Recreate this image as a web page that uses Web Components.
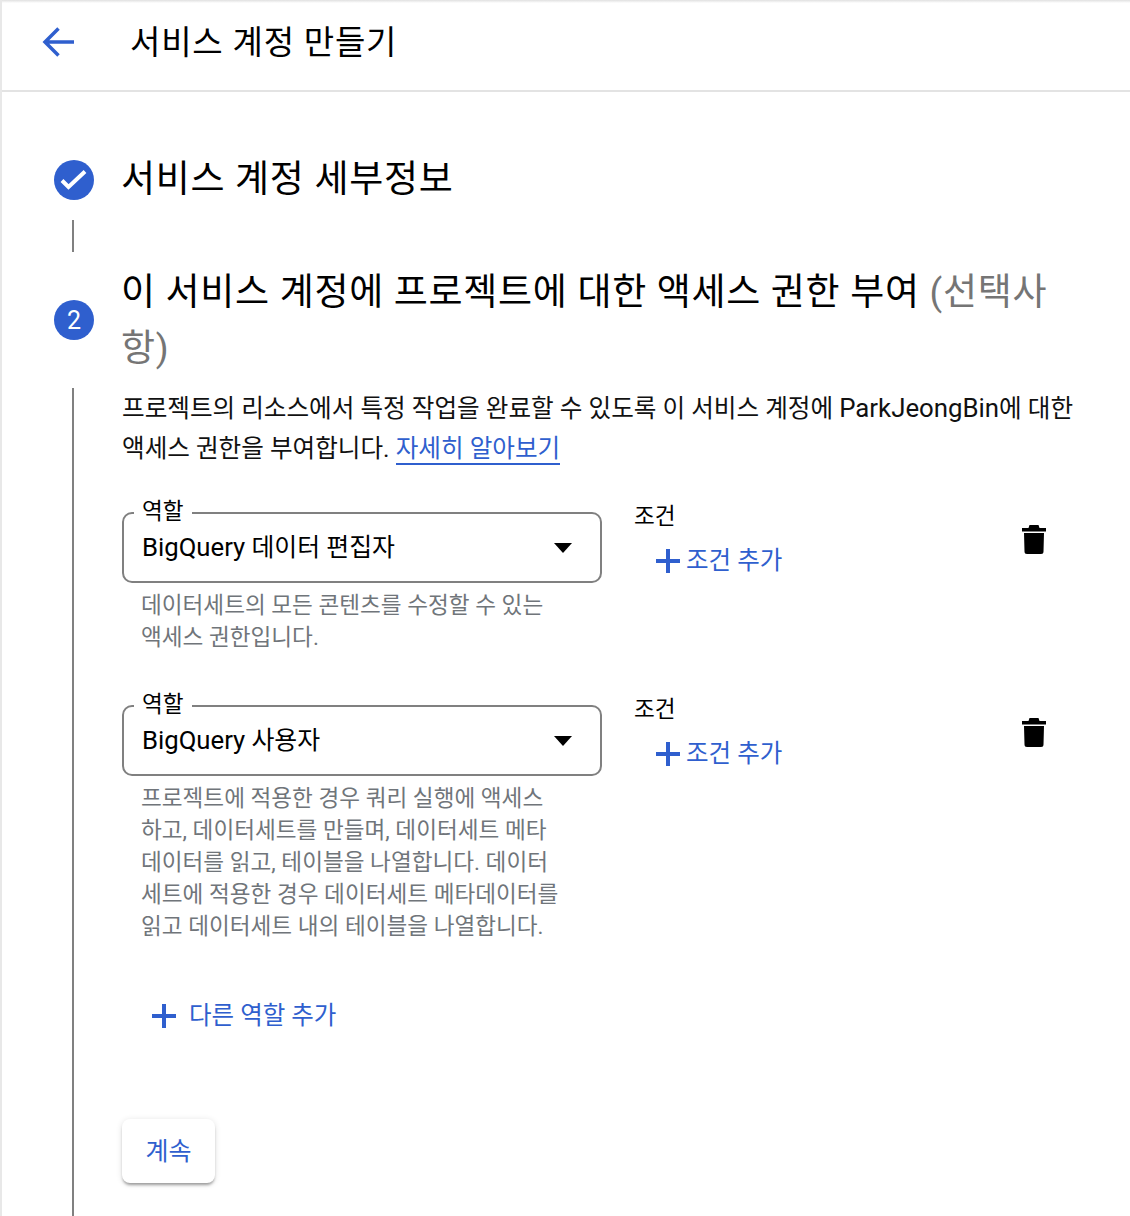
<!DOCTYPE html>
<html lang="ko">
<head>
<meta charset="utf-8">
<title>서비스 계정 만들기</title>
<style>
  html, body { margin: 0; padding: 0; background: #fff; }
  body {
    font-family: Roboto, "Noto Sans CJK KR", sans-serif;
    color: #000;
    height: 1216px;
    overflow: hidden;
  }
</style>
</head>
<body>
<service-page>
  <page-header slot="header">서비스 계정 만들기</page-header>

  <step-item state="done">
    <span slot="title">서비스 계정 세부정보</span>
  </step-item>
  <step-link></step-link>

  <step-item number="2" class="open">
    <span slot="title">이 서비스 계정에 프로젝트에 대한 액세스 권한 부여 <em style="font-style:normal;color:#757575">(선택사항)</em></span>
    <step-body>
      <intro-text>프로젝트의 리소스에서 특정 작업을 완료할 수 있도록 이 서비스 계정에 <span style="font-size:25.800px;line-height:0">ParkJeongBin</span>에 대한 액세스 권한을 부여합니다. <a slot="link">자세히 알아보기</a></intro-text>
      <role-row latin="BigQuery" value="데이터 편집자">데이터세트의 모든 콘텐츠를 수정할 수 있는 액세스 권한입니다.</role-row>
      <role-row latin="BigQuery" value="사용자">프로젝트에 적용한 경우 쿼리 실행에 액세스하고, 데이터세트를 만들며, 데이터세트 메타데이터를 읽고, 테이블을 나열합니다. 데이터세트에 적용한 경우 데이터세트 메타데이터를 읽고 데이터세트 내의 테이블을 나열합니다.</role-row>
      <add-link wide>다른 역할 추가</add-link>
      <raised-button>계속</raised-button>
    </step-body>
  </step-item>
</service-page>

<script>
(function() {
  const blue = '#2f5fce';

  const plusIcon = `<svg width="26" height="26" viewBox="0 0 26 26"><path d="M11 1h4v10h10v4H15v10h-4V15H1v-4h10z" fill="${blue}"/></svg>`;

  class ServicePage extends HTMLElement {
    constructor() {
      super();
      this.attachShadow({ mode: 'open' });
      this.shadowRoot.innerHTML = `
        <style>
          :host { display: block; height: 1216px; border-left: 2px solid #e8e8e8; box-sizing: border-box; overflow: hidden; position: relative; }
          .top { height: 3px; background: linear-gradient(#e0e0e0, #fff); position: absolute; left: 0; right: 0; top: 0; }
          main { display: block; padding: 60px 0 0 52px; }
        </style>
        <div class="top"></div>
        <slot name="header"></slot>
        <main><slot></slot></main>
      `;
    }
  }

  class PageHeader extends HTMLElement {
    constructor() {
      super();
      this.attachShadow({ mode: 'open' });
      this.shadowRoot.innerHTML = `
        <style>
          :host { display: flex; align-items: center; height: 92px; padding-left: 38px; padding-bottom: 6px; box-sizing: border-box; border-bottom: 2px solid #e3e3e3; }
          svg { display: block; width: 36px; height: 36px; margin-right: 54px; }
          h1 { margin: 0; font: 400 33px/1 Roboto, "Noto Sans CJK KR", sans-serif; letter-spacing: .8px; white-space: nowrap; }
        </style>
        <svg viewBox="0 0 36 36"><path d="M34 18H5.500M18.500 4.500 5 18l13.500 13.500" fill="none" stroke="${blue}" stroke-width="3.500"/></svg>
        <h1><slot></slot></h1>
      `;
    }
  }

  class StepItem extends HTMLElement {
    constructor() {
      super();
      this.attachShadow({ mode: 'open' });
      const done = this.getAttribute('state') === 'done';
      const badge = done
        ? `<svg viewBox="0 0 40 40" width="40" height="40"><circle cx="20" cy="20" r="20" fill="${blue}"/><path d="M8 20.500l6.500 6.500L31 11.500" fill="none" stroke="#fff" stroke-width="4"/></svg>`
        : `<span class="num">${this.getAttribute('number') || ''}</span>`;
      this.shadowRoot.innerHTML = `
        <style>
          :host { display: grid; grid-template-columns: 40px 1fr; column-gap: 27px; }
          .badge { grid-row: 1; align-self: center; width: 40px; height: 40px; margin-top: -1px; }
          .badge svg { display: block; }
          .num { display: flex; align-items: center; justify-content: center; width: 40px; height: 40px; border-radius: 50%; background: ${blue}; color: #fff; font: 400 25px Roboto, sans-serif; }
          h2 { grid-row: 1; margin: 0; padding-right: 76px; font: 400 37px/56px Roboto, "Noto Sans CJK KR", sans-serif; letter-spacing: .7px; }
          .body { grid-column: 1 / 3; }
        </style>
        <div class="badge">${badge}</div>
        <h2><slot name="title"></slot></h2>
        <div class="body"><slot></slot></div>
      `;
    }
  }

  class StepLink extends HTMLElement {
    constructor() {
      super();
      this.attachShadow({ mode: 'open' });
      this.shadowRoot.innerHTML = `
        <style>
          :host { display: block; width: 2px; height: 32px; margin: 12px 0 12.500px 18px; background: #808080; }
        </style>
      `;
    }
  }

  class StepBody extends HTMLElement {
    constructor() {
      super();
      this.attachShadow({ mode: 'open' });
      this.shadowRoot.innerHTML = `
        <style>
          :host { display: block; margin: 11.500px 0 0 18px; padding: 1px 0 40px 48px; border-left: 2px solid #808080; min-height: 900px; box-sizing: border-box; }
        </style>
        <slot></slot>
      `;
    }
  }

  class IntroText extends HTMLElement {
    constructor() {
      super();
      this.attachShadow({ mode: 'open' });
      this.shadowRoot.innerHTML = `
        <style>
          :host { display: block; width: 960px; font-size: 24.600px; line-height: 40px; color: #111; margin-bottom: 43px; }
          ::slotted(a) { color: ${blue}; border-bottom: 2px solid ${blue}; }
        </style>
        <slot></slot><slot name="link"></slot>
      `;
    }
  }

  class RoleRow extends HTMLElement {
    constructor() {
      super();
      this.attachShadow({ mode: 'open' });
      this.shadowRoot.innerHTML = `
        <style>
          :host { display: grid; grid-template-columns: 480px 1fr 24px; column-gap: 32px; width: 924px; margin-bottom: 51px; }
          .field { position: relative; height: 71px; box-sizing: border-box; border: 2px solid #808080; border-radius: 10px; display: flex; align-items: center; justify-content: space-between; padding: 0 28px 6px 18px; font-size: 24.900px; }
          .latin { font-size: 25.700px; line-height: 0; }
          .legend { position: absolute; left: 10px; top: -17px; padding: 0 8px; background: #fff; font-size: 22.600px; line-height: 30px; }
          .arrow { width: 0; height: 0; margin-top: 6px; border: 9.500px solid transparent; border-top: 10px solid #000; border-bottom: 0; }
          .help { padding: 7px 41px 0 19px; font-size: 22.600px; line-height: 32px; color: #70757a; }
          .cond { margin-top: -10px; font-size: 22.600px; line-height: 30px; }
          .del { padding-top: 13px; }
          .del svg { display: block; }
        </style>
        <div>
          <div class="field"><span class="legend">역할</span><span><span class="latin">${this.getAttribute('latin')}</span> ${this.getAttribute('value')}</span><span class="arrow"></span></div>
          <div class="help"><slot></slot></div>
        </div>
        <div class="cond">조건<add-link></add-link></div>
        <div class="del"><svg width="24" height="29" viewBox="0 0 24 29"><path d="M7.500 0h9l1 3H24v3.500H0V3h6.500zM2 8h20l-.5 18.500a2.500 2.500 0 0 1-2.500 2.500H5a2.500 2.500 0 0 1-2.500-2.500z" fill="#000"/></svg></div>
      `;
    }
  }

  class AddLink extends HTMLElement {
    constructor() {
      super();
      this.attachShadow({ mode: 'open' });
      const wide = this.hasAttribute('wide');
      const label = this.textContent.trim() || '조건 추가';
      this.shadowRoot.innerHTML = `
        <style>
          :host { display: flex; align-items: center; gap: ${wide ? 12 : 5}px; margin: ${wide ? '58px 0 0 29px' : '13.500px 0 0 21px'}; color: ${blue}; font-size: 24.500px; line-height: 30px; }
          svg { display: block; }
        </style>
        ${plusIcon}<span>${label}</span>
      `;
    }
  }

  class RaisedButton extends HTMLElement {
    constructor() {
      super();
      this.attachShadow({ mode: 'open' });
      this.shadowRoot.innerHTML = `
        <style>
          :host { display: flex; align-items: center; justify-content: center; width: 93px; height: 64px; box-sizing: border-box; padding-bottom: 4px; margin-top: 88px; border-radius: 8px; background: #fff; color: ${blue}; font-size: 25px; box-shadow: 0 3px 3px -1px rgba(0,0,0,.35), 0 1px 6px rgba(0,0,0,.12); }
        </style>
        <slot></slot>
      `;
    }
  }

  customElements.define('add-link', AddLink);
  customElements.define('service-page', ServicePage);
  customElements.define('page-header', PageHeader);
  customElements.define('step-item', StepItem);
  customElements.define('step-link', StepLink);
  customElements.define('step-body', StepBody);
  customElements.define('intro-text', IntroText);
  customElements.define('role-row', RoleRow);
  customElements.define('raised-button', RaisedButton);
})();
</script>
</body>
</html>
